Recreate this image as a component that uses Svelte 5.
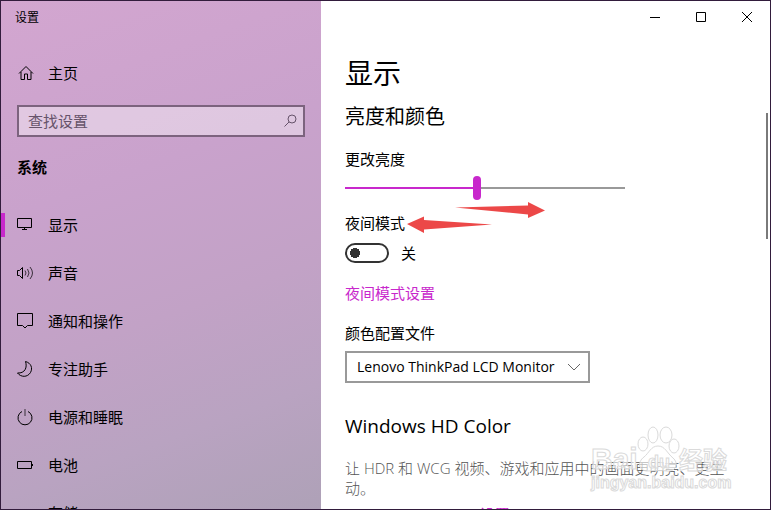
<script>
  let brightness = 47;
  let nightLight = false;
  let search = "";
  let profile = "Lenovo ThinkPad LCD Monitor";
  let current = "显示";

  const items = [
    { name: "显示", icon: "display" },
    { name: "声音", icon: "sound" },
    { name: "通知和操作", icon: "notify" },
    { name: "专注助手", icon: "moon" },
    { name: "电源和睡眠", icon: "power" },
    { name: "电池", icon: "battery" },
    { name: "存储", icon: "storage" },
  ];
</script>

<div class="window">
  <aside>
    <div class="app-title">设置</div>
    <a class="row home" href="#home">
      <svg width="16" height="16" viewBox="0 0 16 16">
        <path d="M1 8.5 8 1.5l7 7M3 7v7.5h3.5V9h3v5.5H13V7" />
      </svg>
      <span>主页</span>
    </a>
    <label class="search">
      <input type="text" placeholder="查找设置" aria-label="查找设置" bind:value={search} />
      <svg width="16" height="16" viewBox="0 0 16 16">
        <circle cx="10" cy="6" r="4" />
        <path d="M7 9 2.500 13.500" />
      </svg>
    </label>
    <h3>系统</h3>
    <nav>
      {#each items as item}
        <a
          class="row"
          class:active={item.name === current}
          href="#{item.icon}"
          on:click|preventDefault={() => (current = item.name)}>
          <svg width="18" height="18" viewBox="0 0 18 18">
            {#if item.icon === "display"}
              <path d="M1.5 2.5h14v9h-14zM8.5 11.5v2M6 13.5h5" />
            {:else if item.icon === "sound"}
              <path d="M1.5 6.5h2l3-3v11l-3-3h-2z" />
              <path class="thin" d="M9 6.5q2 2.500 0 5M11.500 5q3 4 0 8M14 3q5 6 0 12" />
            {:else if item.icon === "notify"}
              <path d="M1.500 1.500h15v12h-5l-2.500 2.500-2.500-2.500h-5z" />
            {:else if item.icon === "moon"}
              <path d="M9.500 1.500C15 3 17 8 14.500 12.500 11.500 17.500 5 17.500 1.500 13 9 13.500 11.500 7.500 9.500 1.500z" />
            {:else if item.icon === "power"}
              <path d="M6 3.500a7 7 0 1 0 6 0" />
              <path class="thin" d="M9 1v7" />
            {:else if item.icon === "battery"}
              <path d="M1.500 5.500h14v7h-14zM16.500 8v2" />
            {:else}
              <path d="M1.500 7.500h14v5h-14z" />
            {/if}
          </svg>
          <span>{item.name}</span>
        </a>
      {/each}
    </nav>
  </aside>

  <main>
    <div class="controls">
      <button aria-label="最小化">
        <svg width="12" height="12" viewBox="0 0 12 12"><path d="M1 6.500h10" /></svg>
      </button>
      <button aria-label="最大化">
        <svg width="12" height="12" viewBox="0 0 12 12"><path d="M1.500 1.500h9v9h-9z" /></svg>
      </button>
      <button aria-label="关闭">
        <svg width="12" height="12" viewBox="0 0 12 12"><path d="M1 1l10 10M11 1 1 11" /></svg>
      </button>
    </div>

    <div class="content">
      <h1>显示</h1>
      <h2>亮度和颜色</h2>

      <label class="caption" for="brightness">更改亮度</label>
      <input
        id="brightness"
        class="slider"
        type="range"
        min="0"
        max="100"
        bind:value={brightness}
        style="--value: {brightness}%" />

      <label class="caption" for="night">夜间模式</label>
      <div class="switch">
        <input id="night" type="checkbox" bind:checked={nightLight} />
        <span>{nightLight ? "开" : "关"}</span>
      </div>
      <a class="link" href="#night-settings">夜间模式设置</a>

      <label class="caption" for="profile">颜色配置文件</label>
      <div class="dropdown">
        <select id="profile" bind:value={profile}>
          <option>Lenovo ThinkPad LCD Monitor</option>
        </select>
        <svg width="14" height="8" viewBox="0 0 14 8"><path d="M1 1l6 6 6-6" /></svg>
      </div>

      <h2 class="hd">Windows HD Color</h2>
      <p>让 HDR 和 WCG 视频、游戏和应用中的画面更明亮、更生动。</p>
      <a class="link hd-link" href="#hd-color">Windows HD Color 设置</a>

      <svg class="arrows" width="140" height="32" viewBox="0 0 140 32">
        <path d="M50 5.500 123 3.500V0l17 8.500-17 7.500v-3.500z" />
        <path d="M87 22.500 19 18v-3.500L2 22l17 9v-3.500z" />
      </svg>
    </div>

    <div class="scrollbar"></div>

    <svg class="watermark" width="150" height="76" viewBox="0 0 150 76">
      <ellipse cx="56" cy="26" rx="5" ry="7" />
      <ellipse cx="66" cy="17" rx="5" ry="8" />
      <ellipse cx="79" cy="17" rx="6" ry="8" />
      <ellipse cx="87" cy="28" rx="5" ry="7" />
      <path d="M71 28c-7 0-9 7-14 11-7 5-5 14 3 14 6 0 14-1 20 0 9 1 12-8 6-13-6-5-8-12-15-12z" />
      <text class="logo" x="4" y="51">Bai</text>
      <text class="du" x="61" y="50">du</text>
      <text class="cn" x="92" y="51">经验</text>
      <text class="site" x="4" y="70">jingyan.baidu.com</text>
    </svg>
  </main>
</div>

<style>
  :global(body) {
    margin: 0;
  }
  .window {
    box-sizing: border-box;
    height: 100vh;
    display: grid;
    grid-template-columns: 320px minmax(0, 1fr);
    border: 1px solid #321c3c;
    overflow: hidden;
    background: #fff;
    color: #000;
    font: 15px/20px "Open Sans", "Noto Sans CJK SC", sans-serif;
  }
  a {
    text-decoration: none;
    color: inherit;
  }
  svg {
    fill: none;
    stroke: currentColor;
    flex: none;
  }
  .thin {
    opacity: 0.7;
  }
  h1,
  h2,
  h3,
  p {
    margin: 0;
    font-weight: 400;
  }

  aside {
    overflow: hidden;
    background: linear-gradient(160deg, #d3a6d0 0%, #c9a2cc 35%, #c2a2c6 60%, #b9a3c1 80%, #aea1b7 100%);
  }
  .app-title {
    height: 32px;
    padding-left: 14px;
    font-size: 12px;
    line-height: 34px;
  }
  .row {
    display: flex;
    align-items: center;
    gap: 14px;
    height: 48px;
    box-sizing: border-box;
    padding-left: 11px;
    border-left: 4px solid transparent;
  }
  .home {
    margin-top: 16px;
    padding-left: 13px;
  }
  .search {
    display: flex;
    align-items: center;
    box-sizing: border-box;
    height: 32px;
    margin: 8px 16px 0;
    padding: 0 5px 0 9px;
    border: 2px solid #7c637e;
    background: rgba(255, 255, 255, 0.4);
    color: #66536a;
  }
  .search input {
    flex: 1;
    min-width: 0;
    padding: 0;
    border: 0;
    outline: 0;
    background: none;
    font: inherit;
  }
  .search input::placeholder {
    color: #66536a;
    opacity: 1;
  }
  h3 {
    padding: 0 16px 4px;
    font-size: 15px;
    font-weight: 700;
    line-height: 60px;
  }
  .active {
    position: relative;
  }
  .active::before {
    content: "";
    position: absolute;
    left: -4px;
    top: 12px;
    width: 4px;
    height: 24px;
    background: #c828cc;
  }

  main {
    position: relative;
    overflow: hidden;
  }
  .controls {
    display: flex;
    justify-content: flex-end;
  }
  .controls button {
    display: flex;
    align-items: center;
    justify-content: center;
    width: 46px;
    height: 32px;
    padding: 0;
    border: 0;
    background: none;
    color: #000;
  }
  .content {
    position: relative;
    display: flex;
    flex-direction: column;
    align-items: flex-start;
    padding: 16px 40px 0 24px;
  }
  h1 {
    font-size: 28px;
    line-height: 48px;
  }
  h2 {
    font-size: 20px;
    line-height: 40px;
  }
  .caption {
    margin-top: 12px;
  }
  .slider {
    appearance: none;
    width: 280px;
    height: 24px;
    margin: 7px 0 1px;
    background: linear-gradient(to right, #c828cc var(--value), #999 var(--value)) center / 100% 2px no-repeat;
  }
  .slider::-webkit-slider-thumb {
    appearance: none;
    width: 8px;
    height: 24px;
    border-radius: 4px;
    background: #c828cc;
  }
  .switch {
    display: flex;
    align-items: center;
    gap: 12px;
    margin: 10px 0 20px;
  }
  .switch input {
    appearance: none;
    box-sizing: border-box;
    width: 44px;
    height: 20px;
    margin: 0;
    border: 2px solid #333;
    border-radius: 10px;
    background: radial-gradient(circle at 8px 8px, #333 5px, transparent 5px);
  }
  .switch input:checked {
    border-color: #c828cc;
    background: radial-gradient(circle at 32px 8px, #fff 5px, #c828cc 5px);
  }
  .link {
    color: #c828cc;
  }
  .link + .caption {
    margin-top: 20px;
  }
  .dropdown {
    display: grid;
    align-items: center;
    margin-top: 8px;
    color: #000;
  }
  .dropdown > * {
    grid-area: 1 / 1;
  }
  .dropdown svg {
    justify-self: end;
    margin-right: 9px;
    color: #666;
    pointer-events: none;
  }
  select {
    appearance: none;
    box-sizing: border-box;
    width: 245px;
    height: 32px;
    padding: 0 20px 0 10px;
    border: 2px solid #999;
    border-radius: 0;
    background: #fff;
    color: #000;
    font: inherit;
    font-size: 14px;
  }
  .hd {
    margin-top: 23px;
    font-size: 19px;
  }
  p {
    margin-top: 12px;
    color: #555;
    font-weight: 300;
  }
  .hd-link {
    margin-top: 6px;
  }

  .arrows {
    position: absolute;
    left: 84px;
    top: 169px;
    fill: #ec4848;
    stroke: none;
  }
  .scrollbar {
    position: absolute;
    right: 2px;
    top: 112px;
    width: 2px;
    height: 126px;
    background: #7a7a7a;
  }
  .watermark {
    position: absolute;
    left: 266px;
    top: 417px;
    fill: rgba(255, 255, 255, 0.6);
    stroke: #dadada;
    pointer-events: none;
  }
  .watermark text {
    font-family: "Liberation Sans", "Noto Sans CJK SC", sans-serif;
    font-weight: 700;
  }
  .logo {
    font-size: 30px;
  }
  .du {
    font-size: 18px;
  }
  .cn {
    font-size: 24px;
  }
  .watermark .site {
    font-size: 16px;
  }
</style>
